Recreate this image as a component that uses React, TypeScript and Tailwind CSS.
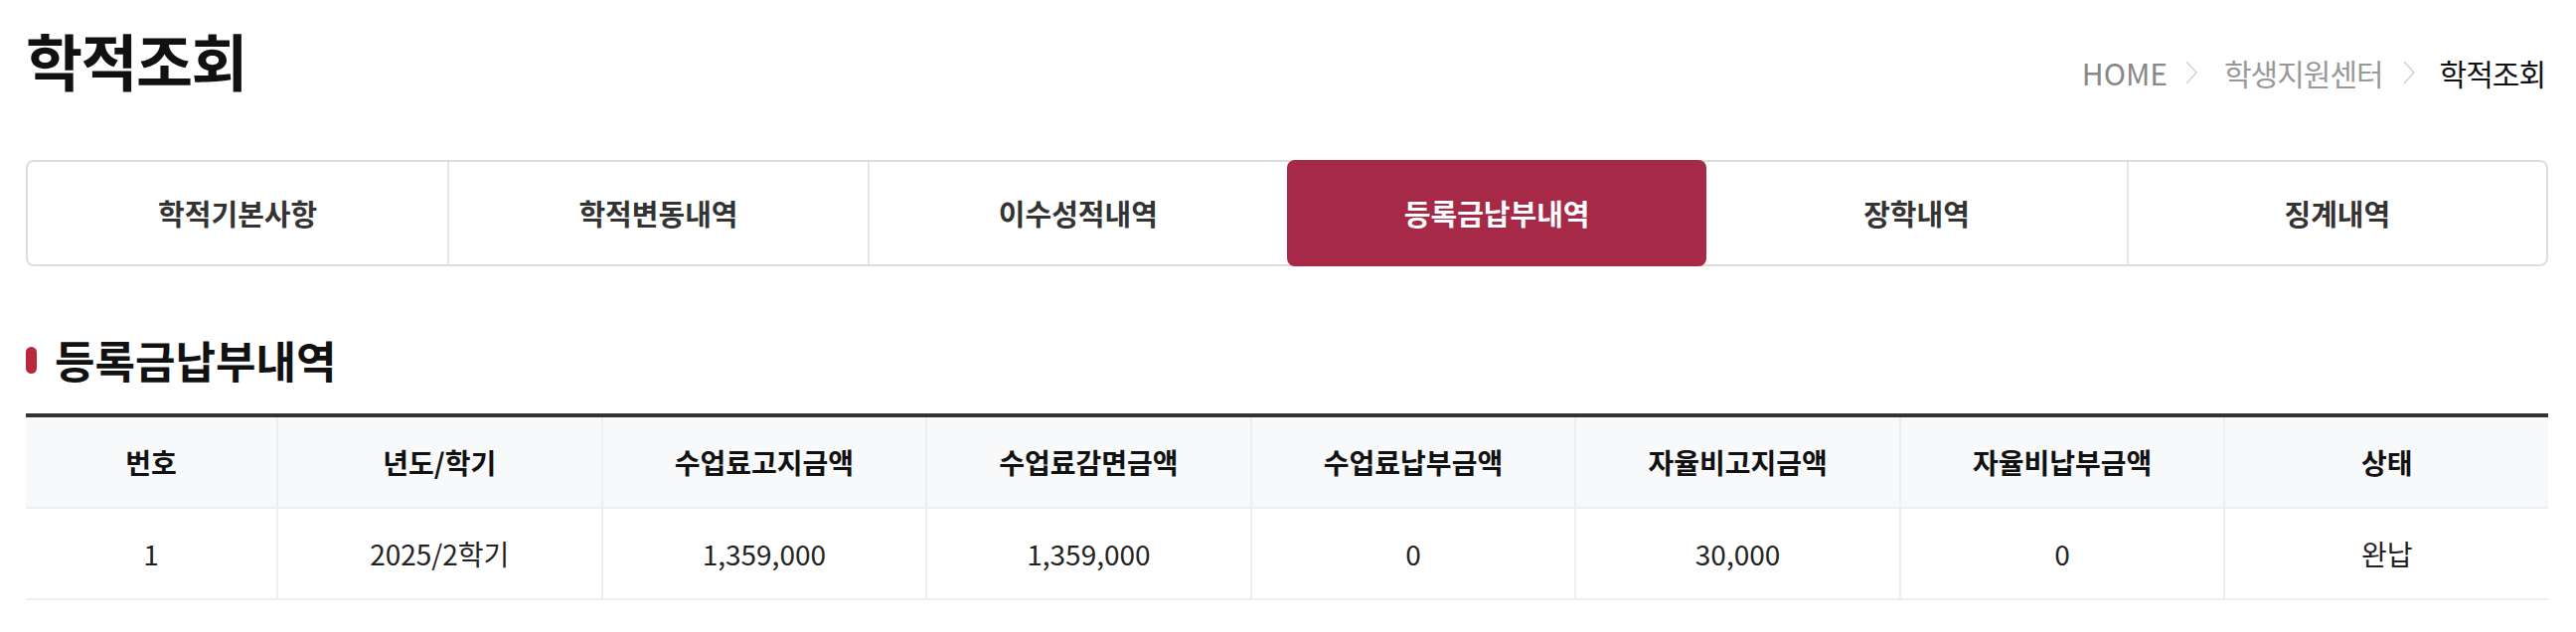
import React from "react";

const tabs = ["학적기본사항", "학적변동내역", "이수성적내역", "등록금납부내역", "장학내역", "징계내역"];
const activeTab = 3;

const columns = ["번호", "년도/학기", "수업료고지금액", "수업료감면금액", "수업료납부금액", "자율비고지금액", "자율비납부금액", "상태"];
const rows = [["1", "2025/2학기", "1,359,000", "1,359,000", "0", "30,000", "0", "완납"]];

function Chevron() {
  return (
    <svg width="14" height="26" viewBox="0 0 14 26" fill="none" className="shrink-0">
      <polyline points="2,2 12,13 2,24" stroke="#d4d4d4" strokeWidth="1.6" />
    </svg>
  );
}

export default function App() {
  return (
    <div className="min-h-screen bg-white pl-[26px] pr-[28px] font-['Noto_Sans_CJK_KR','Noto_Sans',sans-serif] text-[#111]">
      {/* page title + breadcrumb */}
      <div className="flex h-[161px] items-start justify-between">
        <h1 className="pt-[23px] text-[62px] font-bold leading-[74px] tracking-[-1.5px] text-[#111]">학적조회</h1>
        <nav className="mr-[3px] flex items-center pt-[52px] text-[30px] leading-[42px]">
          <span className="text-[#888]">HOME</span>
          <span className="ml-[17px] mr-[26px]"><Chevron /></span>
          <span className="text-[#999] tracking-[-1px]">학생지원센터</span>
          <span className="ml-[19px] mr-[24px]"><Chevron /></span>
          <span className="text-[#111] tracking-[-1px]">학적조회</span>
        </nav>
      </div>

      {/* tabs */}
      <div className="grid h-[107px] grid-cols-6 rounded-[8px] border-2 border-[#dddddd]">
        {tabs.map((t, i) => {
          const active = i === activeTab;
          return (
            <div
              key={t}
              className={
                active
                  ? "-my-[2px] flex items-center justify-center rounded-[8px] bg-[#a62a47] text-[29px] font-bold text-white"
                  : `flex items-center justify-center text-[29px] font-bold text-[#333] ${i > 0 && i !== activeTab + 1 ? "border-l-2 border-[#e6e6e6]" : ""}`
              }
            >
              {t}
            </div>
          );
        })}
      </div>

      {/* section heading */}
      <div className="mt-[72px] mb-[32px] flex h-[44px] items-center">
        <span className="h-[27px] w-[11px] rounded-full bg-[#b8283a]" />
        <h2 className="ml-[18px] text-[44px] font-bold leading-[44px] tracking-[0px] text-[#111]">등록금납부내역</h2>
      </div>

      {/* table */}
      <div className="border-t-4 border-[#333]">
        <div className="grid h-[92px] grid-cols-[252px_repeat(7,1fr)] border-b-2 border-[#eceef1] bg-[#f8f9fb]">
          {columns.map((c, i) => (
            <div
              key={c}
              className={`flex items-center justify-center text-[28px] font-bold text-[#111] ${i > 0 ? "border-l-2 border-[#eceef1]" : ""}`}
            >
              {c}
            </div>
          ))}
        </div>
        {rows.map((r, ri) => (
          <div key={ri} className="grid h-[92px] grid-cols-[252px_repeat(7,1fr)] border-b-2 border-[#eceef1]">
            {r.map((v, i) => (
              <div
                key={i}
                className={`flex items-center justify-center text-[28px] text-[#222] ${i > 0 ? "border-l-2 border-[#eceef1]" : ""}`}
              >
                {v}
              </div>
            ))}
          </div>
        ))}
      </div>
    </div>
  );
}
